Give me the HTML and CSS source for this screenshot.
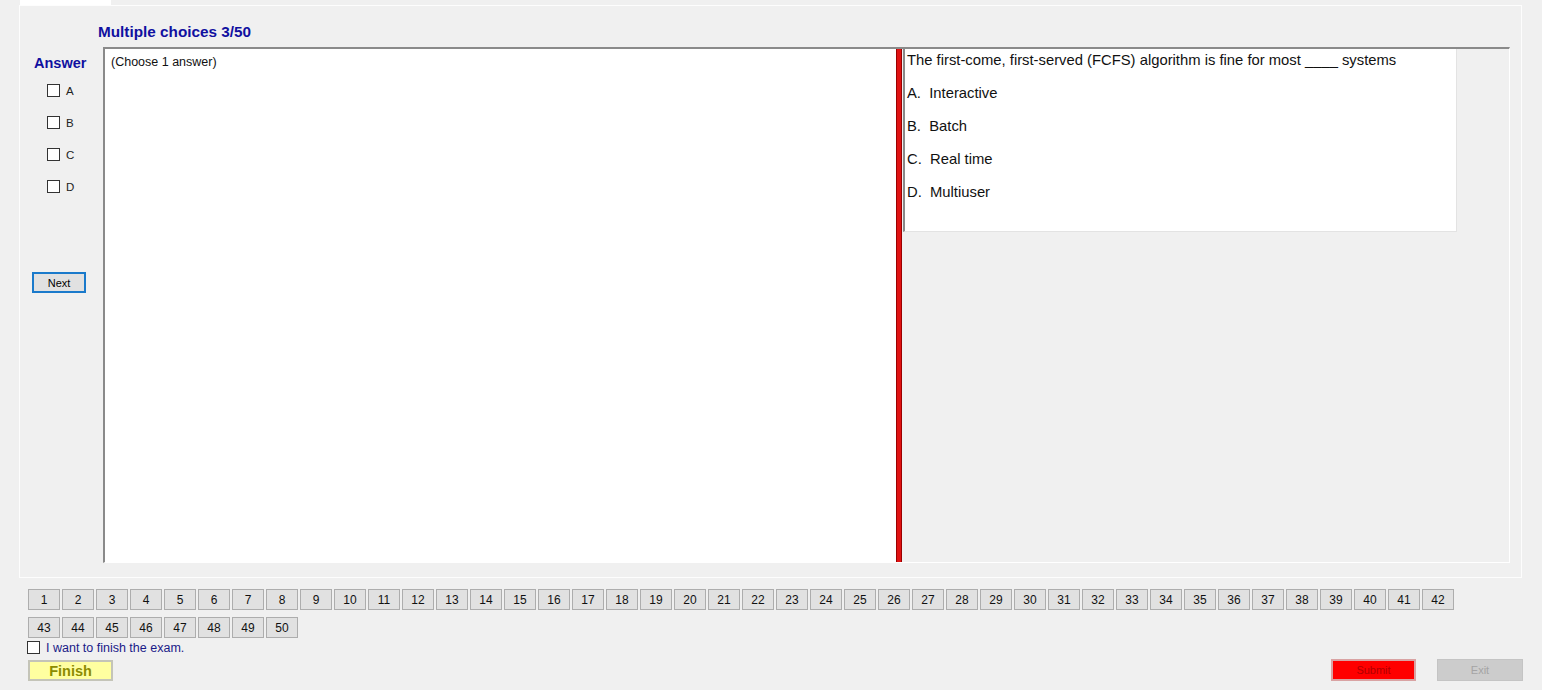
FILE: index.html
```html
<!DOCTYPE html>
<html>
<head>
<meta charset="utf-8">
<link rel="stylesheet" href="styles.css">
</head>
<body>
<div class="tabstrip"><div class="tab"></div></div>
<div class="tabpage">
  <div class="title">Multiple choices 3/50</div>
  <div class="main">
    <div class="sidebar">
      <div class="answer">Answer</div>
      <div class="opt"><span class="box"></span><span>A</span></div>
      <div class="opt"><span class="box"></span><span>B</span></div>
      <div class="opt"><span class="box"></span><span>C</span></div>
      <div class="opt"><span class="box"></span><span>D</span></div>
      <button class="next">Next</button>
    </div>
    <div class="split">
      <div class="lpane"><div class="hint">(Choose 1 answer)</div></div>
      <div class="splitter"></div>
      <div class="rpane">
        <div class="qbox">
          <div class="q">The first-come, first-served (FCFS) algorithm is fine for most ____ systems</div>
          <div class="choices">
            <div class="choice">A.  Interactive</div>
            <div class="choice">B.  Batch</div>
            <div class="choice">C.  Real time</div>
            <div class="choice">D.  Multiuser</div>
          </div>
        </div>
      </div>
    </div>
  </div>
</div>
<div class="bottom">
  <div class="nums">
    <button class="num">1</button><button class="num">2</button><button class="num">3</button><button class="num">4</button><button class="num">5</button><button class="num">6</button><button class="num">7</button><button class="num">8</button><button class="num">9</button><button class="num">10</button>
    <button class="num">11</button><button class="num">12</button><button class="num">13</button><button class="num">14</button><button class="num">15</button><button class="num">16</button><button class="num">17</button><button class="num">18</button><button class="num">19</button><button class="num">20</button>
    <button class="num">21</button><button class="num">22</button><button class="num">23</button><button class="num">24</button><button class="num">25</button><button class="num">26</button><button class="num">27</button><button class="num">28</button><button class="num">29</button><button class="num">30</button>
    <button class="num">31</button><button class="num">32</button><button class="num">33</button><button class="num">34</button><button class="num">35</button><button class="num">36</button><button class="num">37</button><button class="num">38</button><button class="num">39</button><button class="num">40</button>
    <button class="num">41</button><button class="num">42</button><button class="num">43</button><button class="num">44</button><button class="num">45</button><button class="num">46</button><button class="num">47</button><button class="num">48</button><button class="num">49</button><button class="num">50</button>
  </div>
  <div class="finishchk"><span class="box"></span><span>I want to finish the exam.</span></div>
  <div class="actions">
    <button class="finish">Finish</button>
    <div class="spacer"></div>
    <button class="submit">Submit</button>
    <button class="exit">Exit</button>
  </div>
</div>
</body>
</html>
```
FILE: styles.css
```css
* { box-sizing: border-box; }
html, body { margin: 0; padding: 0; }
body {
  width: 1542px;
  height: 690px;
  overflow: hidden;
  background: #f0f0f0;
  font-family: "Liberation Sans", Arial, sans-serif;
  color: #000;
}
button { font-family: "Liberation Sans", Arial, sans-serif; padding: 0; margin: 0; cursor: default; }

.tabstrip { height: 5px; display: flex; }
.tab { margin-left: 20px; width: 91px; background: #fff; }

.tabpage {
  margin-left: 19px;
  width: 1503px;
  height: 573px;
  border: 1px solid #fdfdfd;
  background: #f0f0f0;
  display: flex;
  flex-direction: column;
}
.title {
  margin-top: 17px;
  padding-left: 78px;
  height: 18px;
  line-height: 18px;
  font-size: 15.3px;
  font-weight: bold;
  color: #1010a0;
}
.main { margin-top: 6px; display: flex; }
.sidebar { width: 83px; display: flex; flex-direction: column; }
.answer {
  margin-top: 8px;
  padding-left: 14px;
  height: 16px;
  line-height: 16px;
  font-size: 14.5px;
  font-weight: bold;
  color: #1010a0;
  margin-bottom: 13px;
}
.opt {
  display: flex;
  align-items: center;
  height: 13px;
  margin-bottom: 19px;
  padding-left: 27px;
  font-size: 11.5px;
  color: #222;
}
.box {
  width: 13px;
  height: 13px;
  border: 1px solid #333;
  background: #fff;
  margin-right: 6px;
  flex: none;
}
.next {
  margin-top: 60px;
  margin-left: 12px;
  width: 54px;
  height: 21px;
  border: 2px solid #1a7acb;
  background: #e1e1e1;
  font-size: 11px;
  color: #000;
}

.split {
  width: 1407px;
  height: 516px;
  display: flex;
  border-top: 2px solid #8a8a8a;
  border-left: 2px solid #8a8a8a;
  border-right: 1px solid #fff;
  border-bottom: 1px solid #fff;
}
.lpane { width: 791px; background: #fff; }
.hint {
  padding-left: 6px;
  padding-top: 6px;
  font-size: 12.5px;
  line-height: 14px;
  color: #111;
}
.splitter {
  width: 6px;
  background: #e01212;
  border-left: 1px solid #9a0000;
  border-right: 1px solid #9a0000;
}
.rpane { flex: 1; background: #f0f0f0; }
.qbox {
  margin-left: 1px;
  width: 554px;
  height: 183px;
  background: #fff;
  border-left: 2px solid #8a8a8a;
  border-right: 1px solid #e3e3e3;
  border-bottom: 1px solid #e3e3e3;
  padding-left: 2px;
  padding-top: 1px;
  color: #111;
  font-size: 14.8px;
}
.q { line-height: 20px; white-space: nowrap; }
.choices { margin-top: 7px; }
.choice { line-height: 33px; white-space: pre; }

.bottom { display: flex; flex-direction: column; }
.nums {
  margin-top: 11px;
  margin-left: 28px;
  width: 1428px;
  display: flex;
  flex-wrap: wrap;
  column-gap: 2px;
  row-gap: 7px;
}
.num {
  width: 32px;
  height: 21px;
  border: 1px solid #adadad;
  background: #e1e1e1;
  font-size: 12px;
  color: #111;
}
.finishchk {
  margin-top: 2px;
  margin-left: 27px;
  display: flex;
  align-items: center;
  height: 14px;
  font-size: 12.5px;
  color: #1a1a88;
}
.finishchk span:last-child { padding-top: 2px; }
.actions { margin-top: 5px; display: flex; align-items: flex-start; }
.finish {
  margin-top: 1px;
  margin-left: 28px;
  width: 85px;
  height: 21px;
  background: #ffffa0;
  border: 2px solid #c4c4b8;
  font-size: 14.5px;
  font-weight: bold;
  color: #8c8c00;
}
.spacer { flex: 1; }
.submit {
  width: 85px;
  height: 22px;
  background: #ff0000;
  border: 2px solid #d9a3a3;
  font-size: 11px;
  color: #b00000;
}
.exit {
  margin-left: 21px;
  margin-right: 19px;
  width: 86px;
  height: 22px;
  background: #cccccc;
  border: 1px solid #c4c4c4;
  font-size: 11px;
  color: #a4a4a4;
}
```
